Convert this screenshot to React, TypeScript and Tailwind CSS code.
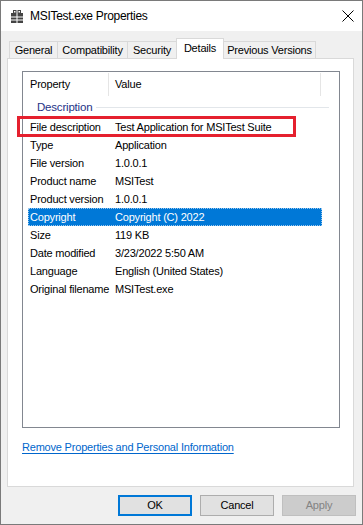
import React from "react";

const rows: [string, string][] = [
  ["File description", "Test Application for MSITest Suite"],
  ["Type", "Application"],
  ["File version", "1.0.0.1"],
  ["Product name", "MSITest"],
  ["Product version", "1.0.0.1"],
  ["Copyright", "Copyright (C) 2022"],
  ["Size", "119 KB"],
  ["Date modified", "3/23/2022 5:50 AM"],
  ["Language", "English (United States)"],
  ["Original filename", "MSITest.exe"],
];

function PropIcon() {
  return (
    <svg width="12" height="13" viewBox="0 0 12 13">
      <rect x="2.5" y="0.5" width="2.5" height="2.5" fill="none" stroke="#444" />
      <rect x="7" y="0.5" width="2.5" height="2.5" fill="none" stroke="#444" />
      <rect x="0" y="3" width="12" height="10" fill="#444" />
      <rect x="5.5" y="3" width="1" height="10" fill="#fff" />
      <rect x="0" y="6.5" width="12" height="1" fill="#fff" />
      <rect x="0" y="9.5" width="12" height="1" fill="#fff" />
    </svg>
  );
}

function CloseIcon() {
  return (
    <svg width="12" height="12" viewBox="0 0 12 12">
      <path d="M0.5 0.5 L11.5 11.5 M11.5 0.5 L0.5 11.5" stroke="#000" strokeWidth="1" fill="none" />
    </svg>
  );
}

export default function App() {
  return (
    <div className="relative w-[363px] h-[525px] border border-[#7a7a7a] bg-[#f0f0f0] flex flex-col font-['Liberation_Sans',Arial,sans-serif] text-[11px] tracking-[-0.2px] text-black overflow-hidden">
      {/* Title bar */}
      <div className="h-[30px] bg-white flex items-center pl-[10px] pr-[8px] shrink-0">
        <PropIcon />
        <span className="ml-[7px] text-[12px] tracking-[-0.3px]">MSITest.exe Properties</span>
        <div className="ml-auto flex items-center">
          <CloseIcon />
        </div>
      </div>

      {/* Body */}
      <div className="pt-[7px] flex flex-col">
        {/* Tabs */}
        <div className="flex items-end ml-[8px] h-[20px]">
          <div className="w-[49px] h-[17px] border border-b-0 border-[#d9d9d9] bg-[#f0f0f0] flex items-center justify-center">General</div>
          <div className="-ml-px w-[71px] h-[17px] border border-b-0 border-[#d9d9d9] bg-[#f0f0f0] flex items-center justify-center">Compatibility</div>
          <div className="-ml-px w-[50px] h-[17px] border border-b-0 border-[#d9d9d9] bg-[#f0f0f0] flex items-center justify-center">Security</div>
          <div className="-ml-px relative z-10 -mb-px w-[48px] h-[21px] border border-b-0 border-[#d9d9d9] bg-white flex items-center justify-center pb-[2px]">Details</div>
          <div className="-ml-px w-[93px] h-[17px] border border-b-0 border-[#d9d9d9] bg-[#f0f0f0] flex items-center justify-center">Previous Versions</div>
        </div>

        {/* Panel */}
        <div className="w-[347px] h-[429px] ml-[6px] border border-[#d9d9d9] bg-white pt-[12px] pl-[14px] flex flex-col">
          {/* List view */}
          <div className="w-[318px] h-[357px] border border-[#828790] bg-white flex flex-col">
            <div className="flex h-[25px] shrink-0">
              <div className="w-[86px] my-[1px] flex items-center pl-[7px] border-r border-[#e5e5e5]">Property</div>
              <div className="w-[212px] my-[1px] flex items-center pl-[6px] border-r border-[#e5e5e5]">Value</div>
            </div>
            <div className="h-[21px] flex items-center pl-[14px] shrink-0">
              <span className="text-[#1e3287] text-[11.5px]">Description</span>
              <div className="flex-1 h-px bg-[#e2e6ea] ml-[4px] mr-[10px]" />
            </div>
            <div className="flex flex-col ml-[5px] w-[294px]">
              {rows.map(([k, v]) =>
                k === "Copyright" ? (
                  <div key={k} className="h-[18px] flex items-center bg-[#0078d7] text-white border border-dotted border-[#9cc8ee]">
                    <div className="w-[86px] pl-[1px] whitespace-nowrap">{k}</div>
                    <div className="whitespace-nowrap">{v}</div>
                  </div>
                ) : (
                  <div key={k} className="h-[18px] flex items-center">
                    <div className="w-[87px] pl-[2px] whitespace-nowrap">{k}</div>
                    <div className="whitespace-nowrap">{v}</div>
                  </div>
                )
              )}
            </div>
          </div>
          <div className="mt-[12px] leading-[14px]">
            <span className="text-[#0066cc] underline decoration-[#0066cc] underline-offset-[2px]">Remove Properties and Personal Information</span>
          </div>
        </div>

        {/* Buttons */}
        <div className="flex justify-end gap-[8px] pr-[6px] mt-[8px]">
          <div className="w-[74px] h-[21px] border-2 border-[#0078d7] bg-[#e1e1e1] flex items-center justify-center">OK</div>
          <div className="w-[74px] h-[21px] border border-[#adadad] bg-[#e1e1e1] flex items-center justify-center">Cancel</div>
          <div className="w-[74px] h-[21px] border border-[#bfbfbf] bg-[#cccccc] text-[#838383] flex items-center justify-center">Apply</div>
        </div>
      </div>

      {/* Red highlight annotation */}
      <div className="absolute left-[16px] top-[115px] w-[279px] h-[21px] border-[3px] border-[#e5202e] pointer-events-none" />
    </div>
  );
}
